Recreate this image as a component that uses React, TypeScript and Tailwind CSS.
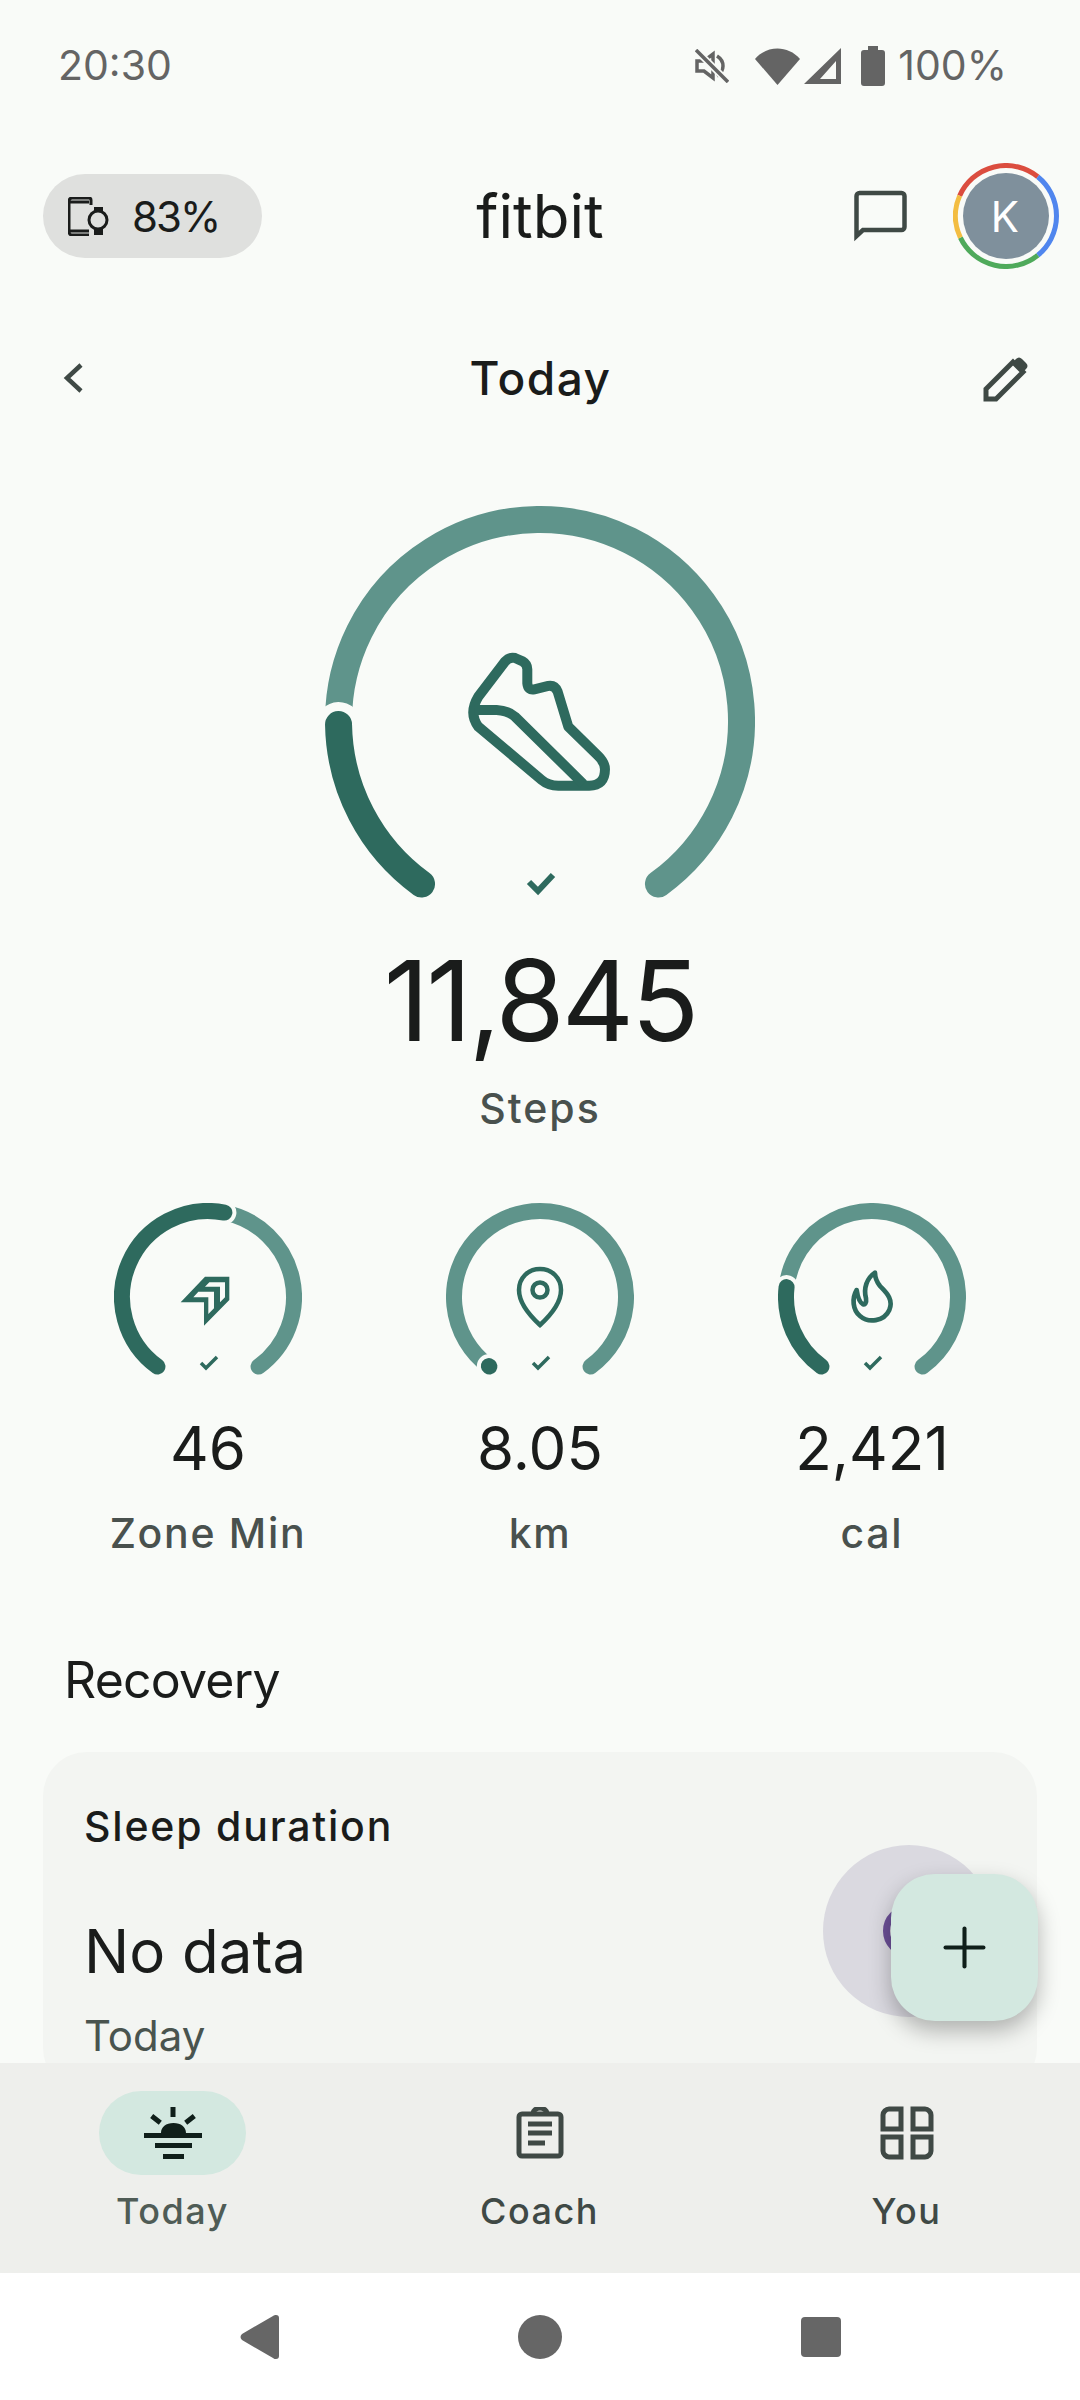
import type { ReactNode } from 'react'
import { Plus } from 'lucide-react'

const bg = '#f9fbf8'

// point on a gauge circle; degrees are clockwise from 12 o'clock
const polar = (cx: number, cy: number, r: number, deg: number) => {
  const a = ((deg - 90) * Math.PI) / 180
  return [cx + r * Math.cos(a), cy + r * Math.sin(a)]
}

const arc = (cx: number, cy: number, r: number, from: number, to: number) => {
  const [x1, y1] = polar(cx, cy, r, from)
  const [x2, y2] = polar(cx, cy, r, to)
  const large = to - from > 180 ? 1 : 0
  return `M${x1} ${y1}A${r} ${r} 0 ${large} 1 ${x2} ${y2}`
}

const Gauge = ({ size, stroke, gap, progress, children }: { size: number; stroke: number; gap: number; progress: number; children?: ReactNode }) => {
  const c = size / 2
  const r = c - stroke / 2
  const start = 216
  const end = 504
  const done = arc(c, c, r, start, start + progress)
  return (
    <svg width={size} height={size} viewBox={`0 0 ${size} ${size}`} className="block" fill="none">
      <path d={arc(c, c, r, start + progress, end)} stroke="#5f948b" strokeWidth={stroke} strokeLinecap="round" />
      {/* wider background stroke bites the notch out of the light arc */}
      <path d={done} stroke={bg} strokeWidth={stroke + gap * 2} strokeLinecap="round" />
      <path d={done} stroke="#2e6a5e" strokeWidth={stroke} strokeLinecap="round" />
      {children}
    </svg>
  )
}

const ShoeIcon = () => (
  <g transform="translate(-25 -26) scale(0.3333)" stroke="#2e6a5e" strokeWidth="30" strokeLinejoin="round">
    <path d="M615 545Q628 530 645 534L668 544Q682 552 682 568L682 610Q684 632 703 628L745 618Q765 615 773 635L805 740L895 828Q915 848 915 868Q915 917 868 917L775 917Q745 917 725 900L535 740Q505 700 535 650Z" />
    <path d="M525 690L590 690Q625 692 645 710L850 912" />
  </g>
)

const metrics = [
  { value: '46', label: 'Zone Min', progress: 155, icon: 'zone' },
  { value: '8.05', label: 'km', progress: 0.5, icon: 'pin' },
  { value: '2,421', label: 'cal', progress: 60.6, icon: 'flame' },
]

const MetricIcon = ({ name }: { name: string }) => {
  if (name === 'zone')
    return (
      <path
        transform="translate(36 37) scale(0.3333)"
        fill="#2e6a5e"
        fillRule="evenodd"
        d="M165 110H238V180L162 257V187H92ZM178 127H225V172L210 187V140H165ZM145 155H192V205L175 222V172H130Z"
      />
    )
  if (name === 'pin')
    return (
      <g stroke="#2e6a5e" strokeWidth="4.5" fill="none">
        <path d="M94 66c12 0 21 9 21 21 0 12-9 24-21 35-12-11-21-23-21-35 0-12 9-21 21-21z" />
        <circle cx="94" cy="87" r="7.5" />
      </g>
    )
  return (
    <path
      transform="translate(32 27) scale(0.3333)"
      stroke="#2e6a5e"
      strokeWidth="14"
      fill="none"
      strokeLinejoin="round"
      d="M195 128C170 145 160 175 168 205C172 232 148 232 140 180C125 205 128 240 150 258C175 280 222 275 238 240C252 205 225 185 210 168C200 155 195 145 195 128Z"
    />
  )
}

const Metric = ({ value, label, progress, icon }: (typeof metrics)[0]) => (
  <div className="flex w-[332px] flex-col items-center">
    <Gauge size={188} stroke={16} gap={4} progress={progress}>
      <MetricIcon name={icon} />
      <path d="M87 160l5 5 11-11" stroke="#2e6a5e" strokeWidth="3.5" />
    </Gauge>
    <div className="mt-[21px] text-[60px] leading-[72px] text-[#1a1c1b]">{value}</div>
    <div className="mt-[23px] text-[41px] font-[450] leading-[52px] tracking-[1.7px] text-[#49514e]">{label}</div>
  </div>
)

const StatusBar = () => (
  <div className="flex h-[130px] items-center justify-between pl-[58px] pr-[73px] pt-[2px] text-[41px] text-[#646464]">
    <span>20:30</span>
    <div className="flex items-center">
      <svg width="34" height="34" viewBox="0 0 34 34" fill="none" stroke="#646464" strokeWidth="3.5">
        <path d="M2 12h7l9-7v24l-9-7H2z" />
        <path d="M22 7c8 5 8 15 0 20" />
        <path d="M1 1l32 32" stroke={bg} strokeWidth="7" />
        <path d="M1 1l32 32" />
      </svg>
      <svg width="45" height="37" viewBox="0 0 45 37" className="ml-[26px]">
        <path d="M0 11C12-3 33-3 45 11L22.5 37z" fill="#646464" />
      </svg>
      <svg width="37" height="36" viewBox="0 0 37 36" className="ml-[4px]">
        <path fillRule="evenodd" d="M37 0v36H0zM32 13 16 31h16z" fill="#646464" />
      </svg>
      <svg width="24" height="40" viewBox="0 0 24 40" className="ml-[20px]">
        <path d="M7 0h10v4h4c2 0 3 1 3 3v30c0 2-1 3-3 3H3c-2 0-3-1-3-3V7c0-2 1-3 3-3h4z" fill="#646464" />
      </svg>
      <span className="ml-[13px]">100%</span>
    </div>
  </div>
)

const TopBar = () => (
  <div className="relative flex h-[172px] items-center justify-between pl-[43px] pr-[21px]">
    <div className="flex h-[84px] w-[219px] items-center rounded-full bg-[#dfe0de] pl-[25px]">
      <svg width="41" height="39" viewBox="0 0 41 39" fill="none" stroke="#1a1c1b" strokeWidth="3">
        <path d="M23 8V3a2 2 0 0 0-2-2H4a3 3 0 0 0-3 3v31a3 3 0 0 0 3 3h17M2 5h19M2 34h19" />
        <circle cx="30" cy="23" r="9" />
        <path d="M26 10h9v4h-9zM26 32h9v6h-9z" fill="#1a1c1b" stroke="none" />
      </svg>
      <span className="ml-[23px] text-[42px] tracking-[-2px] text-[#1a1c1b]">83%</span>
    </div>
    <div className="absolute left-0 right-0 text-center text-[60px] leading-none text-[#1a1c1b]">fitbit</div>
    <div className="relative flex items-center">
      <svg width="53" height="52" viewBox="0 0 53 52" fill="none" className="mr-[46px]" stroke="#3f4945" strokeWidth="4.5">
        <path d="M2.5 46V6a3 3 0 0 1 3-3h42a3 3 0 0 1 3 3v31a3 3 0 0 1-3 3H9z" />
      </svg>
      <svg width="106" height="106" viewBox="0 0 106 106" fill="none" strokeWidth="5">
        <path d={arc(53, 53, 50.5, 293.5, 399)} stroke="#db4d3f" />
        <path d={arc(53, 53, 50.5, 39, 141)} stroke="#5086ee" />
        <path d={arc(53, 53, 50.5, 141, 244.6)} stroke="#4faa5b" />
        <path d={arc(53, 53, 50.5, 244.6, 293.5)} stroke="#f3bd42" />
        <circle cx="53" cy="53" r="43" fill="#7f909c" stroke="none" />
      </svg>
      <span className="absolute right-[40px] text-[42px] text-white">K</span>
    </div>
  </div>
)

const DateRow = () => (
  <div className="mt-[37px] flex h-[78px] items-center justify-between pl-[62px] pr-[50px]">
    <svg width="22" height="30" viewBox="0 0 22 30" fill="none" stroke="#3f4945" strokeWidth="4.5">
      <path d="M19 2 5 15l14 13" />
    </svg>
    <span className="ml-[14px] text-[46px] font-[450] tracking-[1.5px] text-[#1a1c1b]">Today</span>
    <svg width="47" height="47" viewBox="0 0 47 47" fill="none" stroke="#3f4945" strokeWidth="5">
      <path d="M3 44V34L30 7l10 10L13 44z" />
      <path d="M33 4c2-2 4-2 6 0l4 4c2 2 2 4 0 6l-3 3-10-10z" fill="#3f4945" stroke="none" />
    </svg>
  </div>
)

const tabs = [
  { label: 'Today', active: true },
  { label: 'Coach', active: false },
  { label: 'You', active: false },
]

const TabIcon = ({ label }: { label: string }) => {
  if (label === 'Today')
    return (
      <svg width="58" height="52" viewBox="0 0 58 52" fill="#0f1f1a">
        <path d="M26.5 0h5v10h-5z" />
        <path d="M7.7 9l8.6 6.7M50.3 9l-8.6 6.7" stroke="#0f1f1a" strokeWidth="5" />
        <path d="M17 26c0-6 5-10 12.5-10S42 20 42 26h16v5H0v-5zM11 36h37v5H11zM19 47h21v5H19z" />
      </svg>
    )
  if (label === 'Coach')
    return (
      <svg width="48" height="52" viewBox="0 0 48 52" fill="none" stroke="#3f4945" strokeWidth="5">
        <rect x="3" y="7" width="42" height="42" rx="3" />
        <path d="M17 6c0-2 3-5 7-5s7 3 7 5M12 17h24M12 26h24M12 36h17" />
      </svg>
    )
  return (
    <svg width="54" height="54" viewBox="0 0 54 54" fill="none" stroke="#3f4945" strokeWidth="5">
      <path d="M9 3h12v20H3V9c0-3 3-6 6-6zM33 3h12c3 0 6 3 6 6v14H33zM3 31h18v20H9c-3 0-6-3-6-6zM33 31h18v14c0 3-3 6-6 6H33z" />
    </svg>
  )
}

const BottomNav = () => (
  <div className="flex h-[210px] justify-between bg-[#eeefec] pl-[99px] pr-[100px] pt-[28px]">
    {tabs.map(({ label, active }) => (
      <div className="flex w-[147px] flex-col items-center" key={label}>
        <div className={`flex h-[84px] w-[147px] items-center justify-center rounded-full ${active ? 'bg-[#d3e8e0]' : ''}`}>
          <TabIcon label={label} />
        </div>
        <span className={`mt-[13px] text-[36px] font-[450] leading-[46px] tracking-[1.5px] ${active ? 'text-[#4f5c56]' : 'text-[#3f4945]'}`}>{label}</span>
      </div>
    ))}
  </div>
)

const SystemNav = () => (
  <div className="flex h-[127px] items-center justify-center bg-white text-[#666666]">
    <svg width="39" height="44" viewBox="0 0 39 44" fill="currentColor" className="mr-[239px]">
      <path d="M36 0c2 0 3 1 3 3v38c0 2-1 3-3 3-1 0-2 0-3-1L2 25c-2-2-2-4 0-6L33 1c1-1 2-1 3-1z" />
    </svg>
    <div className="h-[44px] w-[44px] rounded-full bg-[#666666]" />
    <div className="ml-[239px] h-[40px] w-[40px] rounded-[4px] bg-[#666666]" />
  </div>
)

export default function App() {
  return (
    <div className="flex h-[2400px] w-[1080px] flex-col overflow-hidden bg-[#f9fbf8] font-['Inter',sans-serif]">
      <div className="relative flex-1 overflow-hidden">
        <StatusBar />
        <TopBar />
        <DateRow />

        <div className="mt-[89px] flex flex-col items-center">
          <Gauge size={430} stroke={27} gap={9} progress={53}>
            <ShoeIcon />
            <path d="M204 376l9 9 15-16" stroke="#2e6a5e" strokeWidth="6" />
          </Gauge>
          <div className="mt-[-4px] text-[112px] leading-[136px] tracking-[-3px] text-[#1a1c1b]">11,845</div>
          <div className="mt-[14px] text-[41px] font-[450] leading-[52px] tracking-[2px] text-[#49514e]">Steps</div>
        </div>

        <div className="mt-[69px] flex justify-center">
          {metrics.map((m) => (
            <Metric key={m.label} {...m} />
          ))}
        </div>

        <h2 className="ml-[64px] mt-[91px] text-[50px] font-normal leading-[60px] tracking-[-0.8px] text-[#1a1c1b]">Recovery</h2>

        <section className="mx-[43px] mt-[42px] h-[340px] rounded-[44px] bg-[#f3f5f2] pl-[41px] pr-[42px] pt-[50px]">
          <h3 className="text-[41px] font-medium leading-[48px] tracking-[1.8px] text-[#1a1c1b]">Sleep duration</h3>
          <div className="mt-[-5px] flex items-start justify-between">
            <div className="pt-[70px]">
              <div className="text-[60px] leading-[72px] text-[#1a1c1b]">No data</div>
              <div className="mt-[21px] text-[42px] leading-[56px] text-[#49544f]">Today</div>
            </div>
            <div className="flex h-[172px] w-[172px] items-center justify-center rounded-full bg-[#dad9e0]">
              <div className="h-[52px] w-[52px] rounded-full border-[7px] border-[#6b4f96]" />
            </div>
          </div>
        </section>

        <button className="absolute bottom-[42px] right-[42px] flex h-[147px] w-[147px] items-center justify-center rounded-[44px] bg-[#d3e8e0] shadow-[0_10px_22px_rgba(0,0,0,0.28)]">
          <Plus className="h-[65px] w-[65px] text-[#0f1f1a]" strokeWidth={1.5} />
        </button>
      </div>
      <BottomNav />
      <SystemNav />
    </div>
  )
}
